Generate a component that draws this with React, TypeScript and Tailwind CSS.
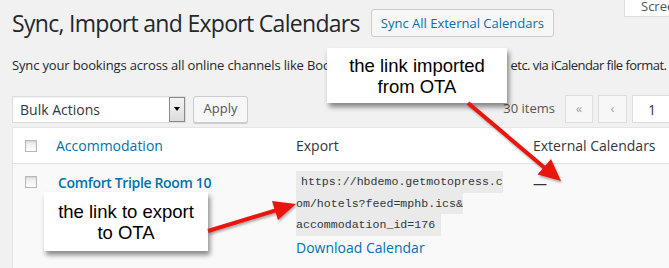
const ui = "font-['Open_Sans','Liberation_Sans',sans-serif]";

function Checkbox() {
  return (
    <span className="block w-3 h-3 border border-[#b4b9be] bg-[linear-gradient(#e9e9e9,#ffffff)] shadow-[inset_0_1px_2px_rgba(0,0,0,0.1)]" />
  );
}

function Callout({ lines, className }: { lines: string[]; className: string }) {
  return (
    <div
      className={`absolute bg-white flex flex-col items-center justify-center shadow-[2px_4px_5px_rgba(0,0,0,0.45)] font-['Liberation_Sans',Arial,sans-serif] text-black text-[18.5px] leading-[21px] ${className}`}
    >
      {lines.map((l) => (
        <span key={l}>{l}</span>
      ))}
    </div>
  );
}

function Arrows() {
  return (
    <svg className="absolute inset-0 pointer-events-none" width="669" height="268" viewBox="0 0 669 268">
      <defs>
        <filter id="sh" x="-20%" y="-20%" width="140%" height="140%">
          <feDropShadow dx="1" dy="2" stdDeviation="1.2" floodColor="#000" floodOpacity="0.3" />
        </filter>
      </defs>
      <g filter="url(#sh)" fill="#e8150e" stroke="#e8150e">
        <line x1="468" y1="103" x2="546" y2="169" strokeWidth="4" />
        <polygon points="561,181 537.5,174.5 551,159" stroke="none" />
        <line x1="208" y1="231" x2="277" y2="210" strokeWidth="4" />
        <polygon points="296,204 272,201 278,220" stroke="none" />
      </g>
    </svg>
  );
}

export default function App() {
  return (
    <div className={`relative w-[669px] h-[268px] overflow-hidden bg-[#f1f1f1] text-[#23282d] ${ui}`}>
      {/* screen options tab */}
      <div className="absolute right-[-20px] top-[-6px] w-[65px] h-[23px] bg-white border border-[#ddd] text-[13px] text-[#555] pl-[16px] pt-[2px]">
        Screen
      </div>

      <div className="pl-3">
        <div className="flex items-center gap-[11px] pt-[9px]">
          <h1 className="text-[23px] leading-[28px] font-normal tracking-[-0.7px]">Sync, Import and Export Calendars</h1>
          <button className="h-[28px] px-[9px] border border-[#ccc] bg-[#f7f7f7] rounded-[3px] text-[13px] text-[#0073aa] leading-[26px]">
            Sync All External Calendars
          </button>
        </div>

        <p className="mt-[18px] text-[13px] leading-[20px] whitespace-nowrap tracking-[-0.15px]">
          Sync your bookings across all online channels like Boo
          <span className="inline-block w-[180px] overflow-hidden align-bottom">king.com, TripAdvisor, Airbnb</span>
          <span className="tracking-[-0.55px]">etc. via iCalendar file format.</span>
        </p>

        <div className="mt-[20px] flex items-center h-[28px]">
          <div className="flex items-center w-[174px] h-[27px] bg-white border border-[#ddd] shadow-[inset_0_1px_2px_rgba(0,0,0,0.07)]">
            <span className="flex-1 pl-[7px] text-[14px] text-[#32373c]">Bulk Actions</span>
            <span className="w-[16px] h-[25px] border border-[#8a8a8a] bg-[linear-gradient(#f4f4f4,#dcdcdc)] flex items-center justify-center">
              <span className="w-0 h-0 border-l-[3px] border-r-[3px] border-t-[4px] border-l-transparent border-r-transparent border-t-black" />
            </span>
          </div>
          <button className="ml-[7px] w-[55px] h-[27px] border border-[#ccc] bg-[#f7f7f7] rounded-[3px] text-[13px] text-[#555] shadow-[0_1px_0_#ccc]">
            Apply
          </button>
          <span className="ml-auto text-[13px] text-[#555] mr-[10px]">30 items</span>
          <span className="w-[28px] h-[28px] border border-[#ddd] bg-[#f7f7f7] text-[#a0a5aa] text-[13px] flex items-center justify-center">«</span>
          <span className="ml-[5px] w-[29px] h-[28px] border border-[#ddd] bg-[#f7f7f7] text-[#a0a5aa] text-[13px] flex items-center justify-center">‹</span>
          <span className="ml-[5px] w-[40px] h-[28px] border border-[#ddd] bg-white text-[14px] text-[#32373c] flex items-center pl-[15px] shrink-0 mr-[-3px]">1</span>
        </div>

        <div className="mt-[4px] w-[720px] border border-[#e5e5e5] bg-white">
          <div className="grid grid-cols-[35px_240px_237px_206px] h-[36px] items-center border-b border-[#e1e1e1] text-[14px]">
            <div className="pl-[12px]">
              <Checkbox />
            </div>
            <div className="px-2 text-[#0073aa]">Accommodation</div>
            <div className="px-2 text-[#32373c]">Export</div>
            <div className="px-2 text-[#32373c]">External Calendars</div>
          </div>
          <div className="grid grid-cols-[35px_240px_237px_206px] bg-[#f9f9f9] h-[120px] text-[14px]">
            <div className="pl-[12px] pt-[12px]">
              <Checkbox />
            </div>
            <div className="pl-[10px] pt-[9px] font-semibold text-[#0073aa] leading-[20px] tracking-[-0.35px]">Comfort Triple Room 10</div>
            <div className="px-2 pt-[7px]">
              <div className="font-['Liberation_Mono',monospace] text-[11.6px] text-[#32373c] leading-[21.5px]">
                <span className="block w-fit bg-[#eaeaea] pl-[5px]">https://hbdemo.getmotopress.c</span>
                <span className="block w-fit bg-[#eaeaea]">om/hotels?feed=mphb.ics&amp;</span>
                <span className="block w-fit bg-[#eaeaea] pr-[6px]">accommodation_id=176</span>
              </div>
              <div className="mt-[2px] text-[#0073aa] leading-[20px]">Download Calendar</div>
            </div>
            <div className="px-2 pt-[9px] text-[#32373c]">—</div>
          </div>
        </div>
      </div>

      <Callout lines={["the link imported", "from OTA"]} className="left-[327px] top-[48px] w-[180px] h-[55px]" />
      <Callout lines={["the link to export", "to OTA"]} className="left-[44px] top-[192px] w-[164px] h-[59px]" />
      <Arrows />
    </div>
  );
}
